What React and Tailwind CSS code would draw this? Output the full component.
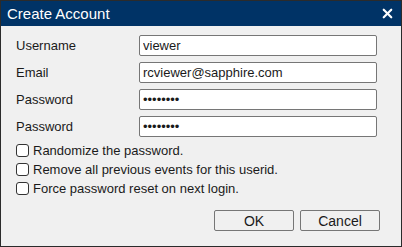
import React from "react";
import { X } from "lucide-react";

const fields = [
  { label: "Username", value: "viewer", type: "text" },
  { label: "Email", value: "rcviewer@sapphire.com", type: "text" },
  { label: "Password", value: "password", type: "password" },
  { label: "Password", value: "password", type: "password" },
];

const options = [
  "Randomize the password.",
  "Remove all previous events for this userid.",
  "Force password reset on next login.",
];

export default function App() {
  return (
    <div
      className="w-[402px] h-[247px] flex flex-col bg-[#f0f0f0] border border-[#2b2b2b] text-[#1a1a1a] text-[13px]"
      style={{ fontFamily: '"Liberation Sans", Arial, sans-serif' }}
    >
      {/* Title bar */}
      <div className="h-[25px] shrink-0 flex items-center justify-between pl-[6px] pr-[6px] bg-[#003366] text-white">
        <span className="text-[15px] leading-none">Create Account</span>
        <X size={15} strokeWidth={3.5} />
      </div>

      {/* Form */}
      <div className="flex flex-col pl-[15px] pr-[24px] pt-[9px] gap-[6px]">
        {fields.map((f, i) => (
          <div key={i} className="flex items-center h-[21px]">
            <label className="w-[123px] shrink-0">{f.label}</label>
            <input
              type={f.type}
              defaultValue={f.value}
              className="flex-1 h-[21px] px-[3px] bg-white border border-[#767676] rounded-[2px] text-[13px] text-[#1a1a1a] outline-none"
            />
          </div>
        ))}
      </div>

      <div className="flex flex-col pl-[15px] pt-[5px] gap-[2px]">
        {options.map((o, i) => (
          <label key={i} className="flex items-center gap-[4px] h-[17px]">
            <span className="w-[13px] h-[13px] shrink-0 bg-white border border-[#333] rounded-[3px]" />
            <span>{o}</span>
          </label>
        ))}
      </div>

      <div className="flex justify-end gap-[6px] pr-[21px] pt-[13px]">
        <button className="w-[80px] h-[21px] bg-[#f0f0f0] border border-[#767676] rounded-[2px] text-[14px] text-[#1a1a1a]">
          OK
        </button>
        <button className="w-[80px] h-[21px] bg-[#f0f0f0] border border-[#767676] rounded-[2px] text-[14px] text-[#1a1a1a]">
          Cancel
        </button>
      </div>
    </div>
  );
}
